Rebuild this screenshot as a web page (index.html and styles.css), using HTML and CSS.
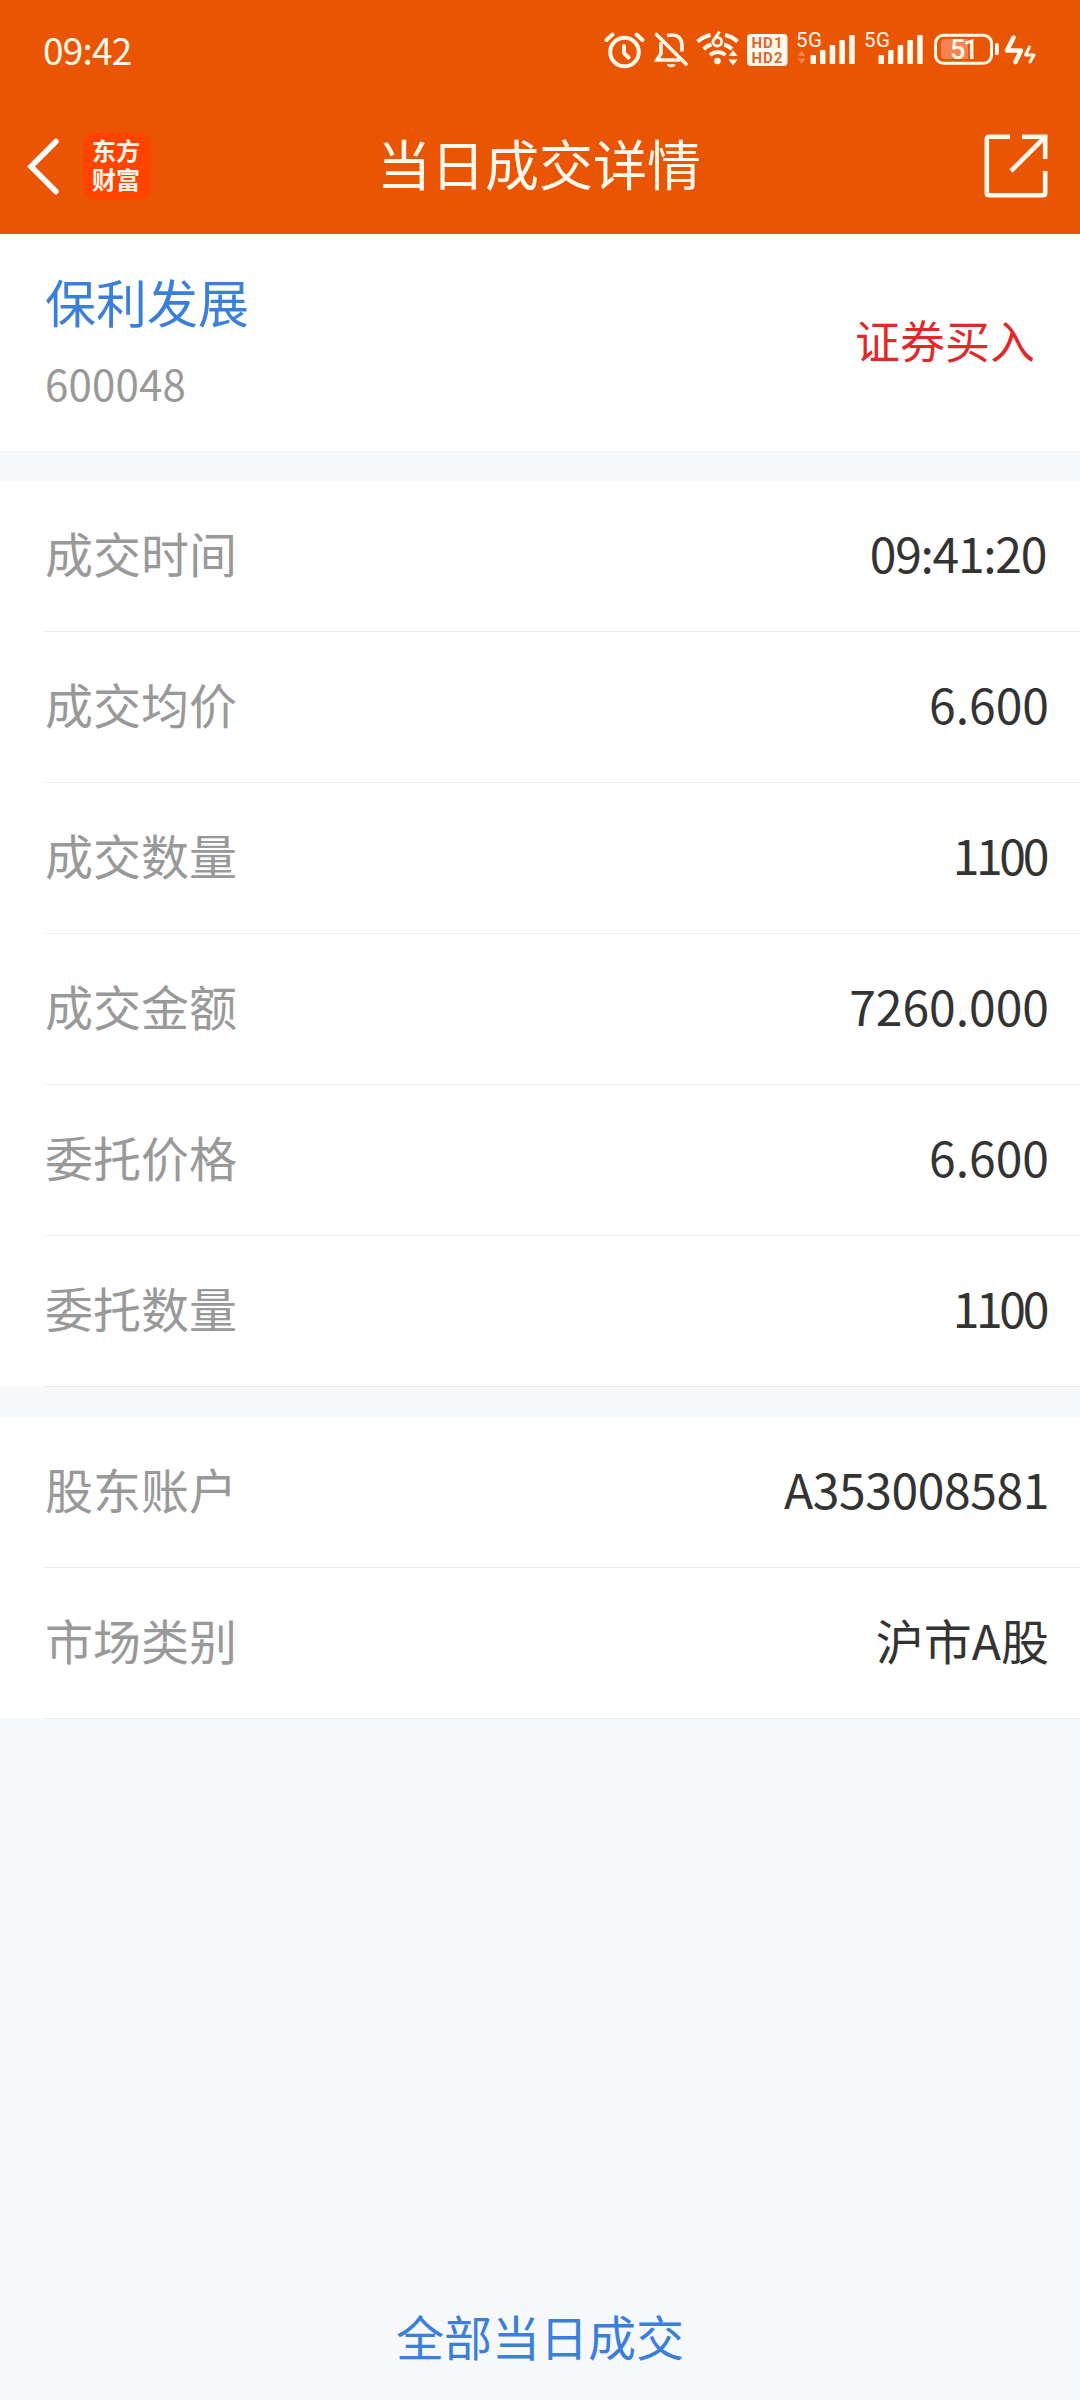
FILE: index.html
```html
<!DOCTYPE html>
<html lang="zh-CN">
  <head>
    <title>当日成交详情</title>
    <meta charset="utf-8">
    <link rel="stylesheet" href="styles.css">
  </head>
  <body>

  <header class="header">
    <div class="status">
      <span class="clock">09:42</span>
      <div class="status-icons">
        <!-- alarm -->
        <svg width="47" height="46" viewBox="603 28 47 46" fill="none" stroke="#fff8ec" stroke-width="4" stroke-linecap="round">
          <circle cx="624.5" cy="52" r="14.3"/>
          <path d="M624 46v7l4.500 4.500" stroke-linejoin="round"/>
          <path d="M606.500 40l6-5.500M642.500 40l-6-5.500"/>
        </svg>
        <!-- muted bell -->
        <svg width="42" height="46" viewBox="650 28 42 46" fill="none" stroke="#fff8ec" stroke-width="3.6">
          <path d="M661 42v11.500l-4 6.500h23M667 35.500q15-3 15 11v5"/>
          <path d="M656.500 34.500L686 64" stroke-linecap="round"/>
          <path d="M667 64.200h8.500a4.300 3.500 0 0 1-8.500 0z" fill="#fff8ec" stroke="none"/>
        </svg>
        <!-- wifi 6 -->
        <svg width="51" height="46" viewBox="692 28 51 46" fill="none" stroke="#fff8ec" stroke-width="4">
          <path d="M697.500 41.500q6-5 13-6.500M725 35q7 1.500 12.500 6.500M703.500 49q4-3.500 8-4.500M724 44.500q4 1 8 4.500M710 55q7.500-6 15.500 0"/>
          <path d="M719.500 31.500l-5.500 8.500" stroke-width="3"/>
          <circle cx="717.300" cy="41.700" r="4.300" stroke-width="2.800"/>
          <circle cx="717.500" cy="61" r="3.300" fill="#fff8ec" stroke="none"/>
          <path d="M728.500 56l4.500-6 4.500 6zM728.500 59.500l4.500 6 4.500-6z" fill="#fff8ec" stroke="none"/>
        </svg>
        <!-- hd1 / hd2 -->
        <svg width="48" height="46" viewBox="743 28 48 46">
          <rect x="747" y="34" width="40.500" height="32" rx="4" fill="#fff8ec"/>
          <g class="hd-text">
            <text x="751.500" y="48.300" textLength="31">HD1</text>
            <text x="751.500" y="62.800" textLength="31">HD2</text>
          </g>
        </svg>
        <!-- sim 1 -->
        <svg width="68" height="46" viewBox="791 28 68 46" fill="#fff8ec">
          <text class="net-text" x="796" y="47" textLength="26">5G</text>
          <path d="M797.500 56l4-5.500 4 5.500zM797.500 58.500l4 5.500 4-5.500z" fill="#f98550"/>
          <rect x="810.500" y="55" width="5.500" height="9" rx="1"/>
          <rect x="820" y="50" width="5.500" height="14" rx="1"/>
          <rect x="829.700" y="45" width="5.500" height="19" rx="1"/>
          <rect x="839.400" y="40" width="5.500" height="24" rx="1"/>
          <rect x="849.200" y="35" width="5.500" height="29" rx="1"/>
        </svg>
        <!-- sim 2 -->
        <svg width="70" height="46" viewBox="859 28 70 46" fill="#fff8ec">
          <text class="net-text" x="864" y="47" textLength="26">5G</text>
          <rect x="878.500" y="55" width="5.500" height="9" rx="1"/>
          <rect x="888" y="50" width="5.500" height="14" rx="1"/>
          <rect x="897.700" y="45" width="5.500" height="19" rx="1"/>
          <rect x="907.400" y="40" width="5.500" height="24" rx="1"/>
          <rect x="917.200" y="35" width="5.500" height="29" rx="1"/>
        </svg>
        <!-- battery -->
        <svg width="73" height="46" viewBox="929 28 73 46">
          <rect x="935.500" y="35.300" width="56" height="28" rx="8" fill="none" stroke="#fff8ec" stroke-width="3"/>
          <path d="M945 39h23v20h-23q-4 0-4-4v-12q0-4 4-4z" fill="#f38350"/>
          <rect x="995" y="43" width="3.800" height="12" rx="1.500" fill="#fff8ec"/>
          <text class="battery-text" x="950" y="58.700">51</text>
        </svg>
        <!-- charging -->
        <svg width="38" height="46" viewBox="1002 28 38 46" fill="none" stroke="#fff8ec" stroke-linejoin="round" stroke-linecap="round">
          <path d="M1013.500 37.500l-6.500 13h14l-5.500 11.500" stroke-width="4.500"/>
          <path d="M1029.500 47l-4 8h8.500l-4 7" stroke-width="3"/>
        </svg>
      </div>
    </div>

    <div class="nav">
      <div class="nav-left">
        <svg width="36" height="60" viewBox="0 0 36 60" fill="none" stroke="#fff" stroke-width="5.500" stroke-linecap="round">
          <path d="M31 5.500L6 30.500l25 25"/>
        </svg>
        <div class="logo">东方<br>财富</div>
      </div>
      <h1 class="title">当日成交详情</h1>
      <svg class="share" width="64" height="64" viewBox="0 0 64 64" fill="none" stroke="#fff8ec" stroke-width="4.600">
        <path d="M26 2.800H5q-2.200 0-2.200 2.200v54q0 2.200 2.200 2.200h54q2.200 0 2.200-2.200V37"/>
        <path d="M38 2.800h23.200V25M61 3L27 37"/>
      </svg>
    </div>
  </header>

  <section class="stock">
    <div>
      <div class="stock-name">保利发展</div>
      <div class="stock-code">600048</div>
    </div>
    <div class="direction">证券买入</div>
  </section>

  <section class="list">
    <div class="row">
      <span class="label">成交时间</span>
      <span class="value time">09:41:20</span>
    </div>
    <div class="row">
      <span class="label">成交均价</span>
      <span class="value">6.600</span>
    </div>
    <div class="row">
      <span class="label">成交数量</span>
      <span class="value count">1100</span>
    </div>
    <div class="row">
      <span class="label">成交金额</span>
      <span class="value">7260.000</span>
    </div>
    <div class="row">
      <span class="label">委托价格</span>
      <span class="value">6.600</span>
    </div>
    <div class="row">
      <span class="label">委托数量</span>
      <span class="value count">1100</span>
    </div>
  </section>

  <section class="list">
    <div class="row">
      <span class="label">股东账户</span>
      <span class="value account">A353008581</span>
    </div>
    <div class="row">
      <span class="label">市场类别</span>
      <span class="value">沪市A股</span>
    </div>
  </section>

  <a class="all-deals">全部当日成交</a>

  </body>
</html>
```

FILE: styles.css
```css
* {
  box-sizing: border-box;
}
body {
  margin: 0;
  height: 2400px;
  display: flex;
  flex-direction: column;
  background: #f6f8fa;
  color: #333;
  font-family: "Noto Sans CJK SC", sans-serif;
  font-size: 48px;
  line-height: 1;
}

svg {
  display: block;
}

.header {
  height: 234px;
  background: #ea5504;
  color: #fff8ec;
}

.status {
  height: 102px;
  padding: 0 40px 0 43px;
  display: flex;
  align-items: center;
  justify-content: space-between;
}

.clock {
  padding-bottom: 4px;
  font-size: 37px;
  letter-spacing: -0.8px;
}

.status-icons {
  display: flex;
}

.hd-text {
  font: bold 15px Roboto, sans-serif;
  fill: #d9682c;
}

.net-text {
  font: 20.5px Roboto, sans-serif;
}

.battery-text {
  font: 500 27px Roboto, sans-serif;
  letter-spacing: -2px;
  fill: #fff8ec;
}

.nav {
  height: 132px;
  padding: 0 32px 4px 25px;
  display: grid;
  grid-template-columns: 1fr auto 1fr;
  align-items: center;
}

.nav-left {
  display: flex;
  align-items: center;
  gap: 22px;
}

.logo {
  width: 68px;
  height: 68px;
  padding: 3px 2px 0 0;
  border-radius: 14px;
  background: #ff4400;
  font-size: 24px;
  font-weight: bold;
  line-height: 29px;
  text-align: center;
}

.title {
  margin: 0;
  padding: 0 0 6px 5px;
  font-size: 54px;
  font-weight: normal;
}

.share {
  justify-self: end;
}

.stock {
  height: 217px;
  padding: 0 45px 6px;
  display: flex;
  align-items: center;
  justify-content: space-between;
  background: #fff;
}

.stock-name {
  color: #3a7fd9;
  font-size: 51px;
}

.stock-code {
  margin-top: 35px;
  color: #999;
  font-size: 42px;
  letter-spacing: 0.2px;
}

.direction {
  color: #e02a2a;
  font-size: 45px;
}

.list {
  margin-top: 30px;
}

.row {
  height: 151px;
  padding: 0 31px 10px 45px;
  display: flex;
  align-items: center;
  justify-content: space-between;
  background: linear-gradient(#ececee, #ececee) 45px 150px no-repeat #fff;
}

.row:last-child {
  background: linear-gradient(#ececee, #ececee) 45px 150px no-repeat, linear-gradient(#fff 150px, #f6f8fa 150px);
}

.label {
  color: #999;
}

/* tighten the runs of narrow digits */
.time {
  margin-right: 3px;
  letter-spacing: -1.3px;
}

.count {
  margin-right: 3px;
  letter-spacing: -3.3px;
}

.account {
  letter-spacing: -0.4px;
}

.all-deals {
  margin: auto auto 41px;
  color: #3a7fd9;
}
```
